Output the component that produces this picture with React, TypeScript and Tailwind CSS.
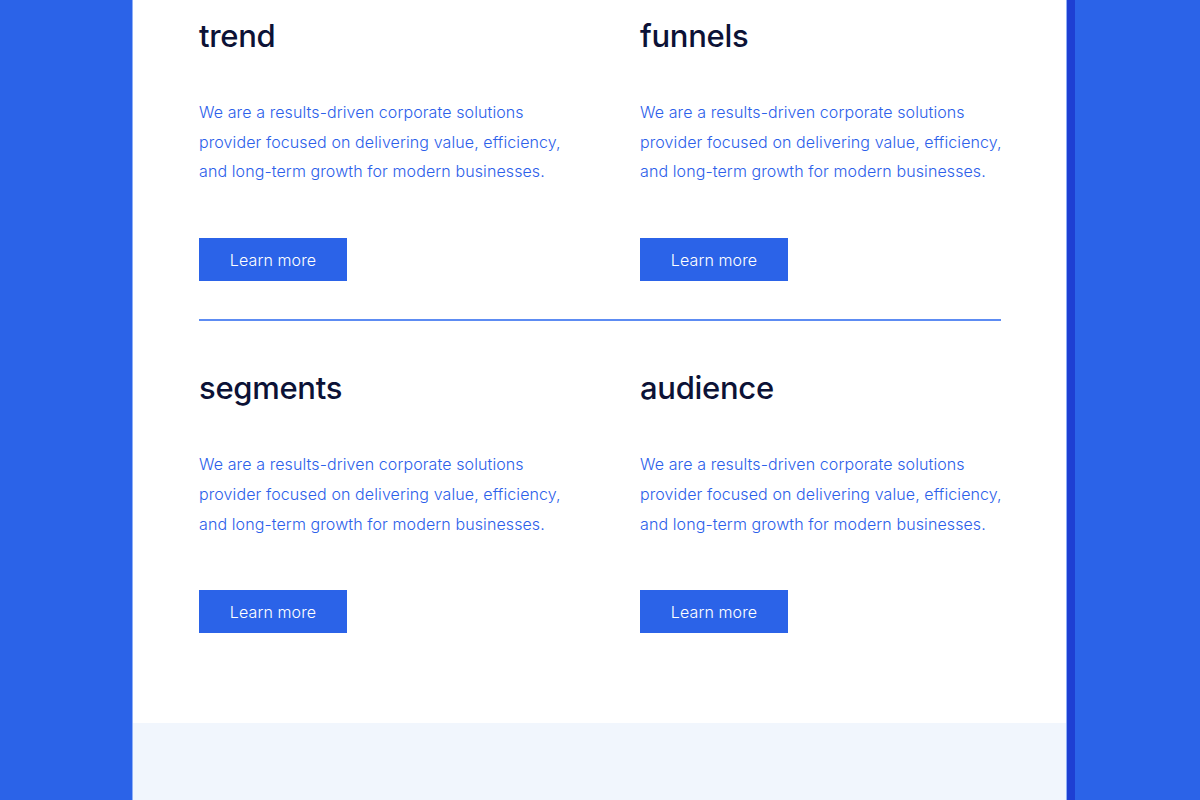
import React from "react";

const items = [
  { title: "trend" },
  { title: "funnels" },
  { title: "segments" },
  { title: "audience" },
];

function Feature({ title }: { title: string }) {
  return (
    <div className="flex flex-col">
      <h3 className="text-[31px] leading-[40px] font-medium text-[#0c1236] tracking-[-0.3px]">{title}</h3>
      <p className="mt-[42px] text-[16px] leading-[29.7px] font-light text-[#2c60ea] tracking-[0.1px] whitespace-nowrap">
        <span className="block">We are a results-driven corporate solutions</span>
        <span className="block">provider focused on delivering value, efficiency,</span>
        <span className="block">and long-term growth for modern businesses.</span>
      </p>
      <div className="mt-[51px]">
        <button className="w-[148px] h-[43px] bg-[#2b63e8] text-white text-[16px] font-light tracking-[0.1px]">
          Learn more
        </button>
      </div>
    </div>
  );
}

export default function App() {
  return (
    <div
      className="w-[1200px] h-[800px] overflow-hidden bg-[#2b63e8] flex"
      style={{ fontFamily: "Inter, 'Liberation Sans', sans-serif" }}
    >
      <div className="w-[132px] shrink-0" />
      <div className="w-[935px] shrink-0 bg-white border-x border-[#8fb0f7] flex flex-col">
        <div className="pl-[66px] pr-[65px] pt-[16px] pb-[90px]">
          <div className="grid grid-cols-[361px_361px] gap-x-[80px]">
            <Feature {...items[0]} />
            <Feature {...items[1]} />
          </div>
          <div className="h-[2px] bg-[#5d8cf3] mt-[38px] mb-[47px]" />
          <div className="grid grid-cols-[361px_361px] gap-x-[80px]">
            <Feature {...items[2]} />
            <Feature {...items[3]} />
          </div>
        </div>
        <div className="flex-1 bg-[#f1f6fd]" />
      </div>
      <div className="w-[8px] shrink-0 bg-[#1e3fd3]" />
      <div className="flex-1" />
    </div>
  );
}
